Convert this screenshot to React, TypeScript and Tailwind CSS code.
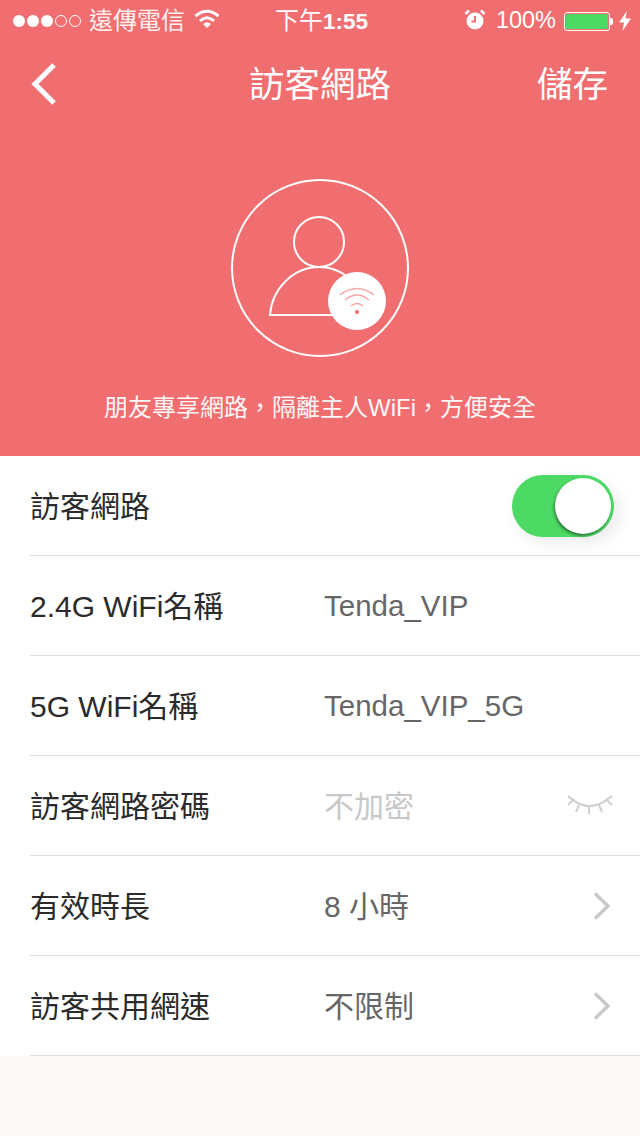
const FONT = "font-['Liberation_Sans','Noto_Sans_CJK_TC',sans-serif]"

function Chevron() {
  return (
    <svg width="18" height="28" viewBox="0 0 18 28" fill="none" stroke="#c8c8c8" strokeWidth="3.4">
      <path d="M2 1.5 L15 14 L2 26.5" />
    </svg>
  )
}

function Eye() {
  return (
    <svg width="46" height="22" viewBox="0 0 46 22" fill="none" stroke="#cfcfcf" strokeWidth="2">
      <path d="M1 1 Q22 21 45 1" />
      <path d="M1 10 L7 4 M9 17 L12 10 M22 19 L22 11 M35 17 L32 10 M45 10 L39 4" />
    </svg>
  )
}

function Row({ label, value, valueClass = 'text-[30px] text-[#666]', icon }: { label: string; value: string; valueClass?: string; icon?: React.ReactNode }) {
  return (
    <div className="ml-[30px] h-[100px] flex items-center border-b border-[#ddd] pt-px">
      <div className="w-[294px] text-[30px] text-[#2b2b2b]">{label}</div>
      <div className={`flex-1 ${valueClass}`}>{value}</div>
      {icon}
    </div>
  )
}

export default function App() {
  return (
    <div className={`${FONT} w-[640px] h-[1136px] bg-[#fbfaf8] overflow-hidden`}>
      <div className="h-[456px] bg-[#f06e70] text-white flex flex-col">
        {/* status bar */}
        <div className="h-[42px] flex items-center px-[13px] text-[24px] relative">
          <div className="flex items-center gap-[2px]">
            <span className="w-3 h-3 rounded-full bg-white" />
            <span className="w-3 h-3 rounded-full bg-white" />
            <span className="w-3 h-3 rounded-full bg-white" />
            <span className="w-3 h-3 rounded-full border border-white" />
            <span className="w-3 h-3 rounded-full border border-white" />
          </div>
          <span className="ml-2 opacity-90">遠傳電信</span>
          <svg className="ml-[9px] mb-1" width="26" height="20" viewBox="0 0 26 20" fill="none" stroke="#fff" strokeWidth="3">
            <path d="M1.5 7 Q13 -2.5 24.500 7" />
            <path d="M6 12 Q13 5.500 20 12" />
            <path d="M9 15 L13 19 L17 15 Q13 11.500 9 15Z" fill="#fff" stroke="none" />
          </svg>
          <span className="absolute left-[275px] top-[3px] text-[24px]">下午<span className="font-bold text-[22.5px]">1:55</span></span>
          <div className="ml-auto flex items-center">
            <svg width="22" height="22" viewBox="0 0 22 22" className="mr-[10px] mb-[3px]">
              <circle cx="11" cy="12" r="8.500" fill="#fff" />
              <path d="M11 7 V12.500 H7.500" stroke="#f06e70" strokeWidth="2" fill="none" />
              <path d="M1.500 5 L5 1.500 M20.500 5 L17 1.500" stroke="#fff" strokeWidth="2.500" />
            </svg>
            <span className="text-[23.5px]">100%</span>
            <div className="ml-2 w-[46px] h-[19px] rounded-[3px] border border-white p-px">
              <div className="h-full bg-[#4cd964] rounded-[2px]" />
            </div>
            <div className="w-[3px] h-[7px] bg-white rounded-r-[2px]" />
            <svg className="ml-[6px] mr-[-4px]" width="12" height="20" viewBox="0 0 12 20" fill="#fff">
              <path d="M8 0 L0 11.500 H5 L3.500 20 L12 7.500 H6.500 Z" />
            </svg>
          </div>
        </div>
        {/* nav */}
        <div className="h-[88px] flex items-center justify-between relative pl-[31px] pr-[32px]">
          <svg className="mb-1" width="26" height="42" viewBox="0 0 26 42" fill="none" stroke="#fff" strokeWidth="5">
            <path d="M23 2 L4 21 L23 40" />
          </svg>
          <span className="absolute left-0 right-0 text-center text-[35.5px]">訪客網路</span>
          <span className="text-[35.5px]">儲存</span>
        </div>
        {/* hero */}
        <div className="flex justify-center mt-[49px]">
          <div className="w-[178px] h-[178px] rounded-full border-2 border-white relative">
            <svg className="absolute left-[36px] top-[35px]" width="120" height="104" viewBox="0 0 120 104" fill="none" stroke="#fff" strokeWidth="2">
              <circle cx="50" cy="26" r="25" />
              <path d="M1 99 C3 72 25 51 50 51 C75 51 97 72 99 99 Z" />
            </svg>
            <div className="absolute left-[95px] top-[91px] w-[58px] h-[58px] rounded-full bg-white flex items-center justify-center">
              <svg width="36" height="28" viewBox="0 0 36 28" fill="none" stroke="#f5a5a6" strokeWidth="1.500">
                <path d="M1 8 Q18 -5 35 8" />
                <path d="M6 13 Q18 3 30 13" />
                <path d="M12 19 Q18 14 24 19" />
                <circle cx="18" cy="25" r="2" fill="#f06e70" stroke="none" />
              </svg>
            </div>
          </div>
        </div>
        <div className="mt-[34px] text-center text-[24px] leading-[34px] opacity-95">朋友專享網路，隔離主人WiFi，方便安全</div>
      </div>
      <div className="bg-white h-[600px]">
        <div className="ml-[30px] h-[100px] flex items-center justify-between border-b border-[#ddd] pt-px">
          <div className="text-[30px] text-[#2b2b2b]">訪客網路</div>
          <div className="mr-[26px] w-[102px] h-[62px] rounded-full bg-[#4cd964] relative shadow-[6px_6px_16px_rgba(0,0,0,0.08)]">
            <div className="absolute right-[3px] top-[3px] w-14 h-14 rounded-full bg-white shadow-[-1px_2px_3px_rgba(0,0,0,0.45)]" />
          </div>
        </div>
        <Row label="2.4G WiFi名稱" value="Tenda_VIP" valueClass="text-[29.5px] text-[#666]" />
        <Row label="5G WiFi名稱" value="Tenda_VIP_5G" valueClass="text-[29.5px] text-[#666]" />
        <Row label="訪客網路密碼" value="不加密" valueClass="text-[30px] text-[#c8c8c8]" icon={<div className="mr-[27px]"><Eye /></div>} />
        <Row label="有效時長" value="8 小時" icon={<div className="mr-[29px]"><Chevron /></div>} />
        <Row label="訪客共用網速" value="不限制" icon={<div className="mr-[29px]"><Chevron /></div>} />
      </div>
    </div>
  )
}
